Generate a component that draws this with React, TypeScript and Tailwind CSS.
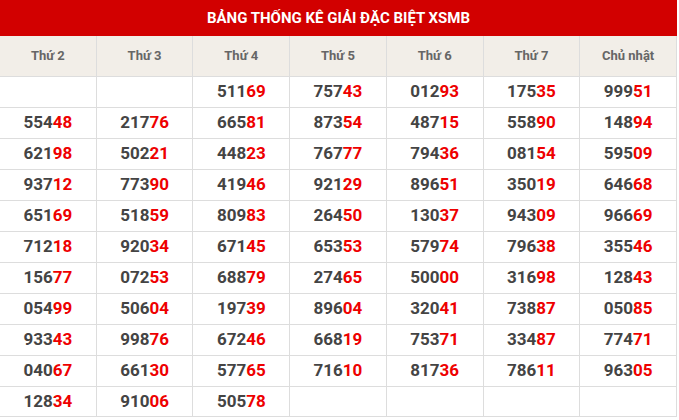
import React from "react";

const rows: string[][] = [
  ["", "", "51169", "75743", "01293", "17535", "99951"],
  ["55448", "21776", "66581", "87354", "48715", "55890", "14894"],
  ["62198", "50221", "44823", "76777", "79436", "08154", "59509"],
  ["93712", "77390", "41946", "92129", "89651", "35019", "64668"],
  ["65169", "51859", "80983", "26450", "13037", "94309", "96669"],
  ["71218", "92034", "67145", "65353", "57974", "79638", "35546"],
  ["15677", "07253", "68879", "27465", "50000", "31698", "12843"],
  ["05499", "50604", "19739", "89604", "32041", "73887", "05085"],
  ["93343", "99876", "67246", "66819", "75371", "33487", "77471"],
  ["04067", "66130", "57765", "71610", "81736", "78611", "96305"],
  ["12834", "91006", "50578", "", "", "", ""],
];

const days = ["Thứ 2", "Thứ 3", "Thứ 4", "Thứ 5", "Thứ 6", "Thứ 7", "Chủ nhật"];

export default function App() {
  return (
    <div
      className="w-[677px] bg-white"
      style={{ fontFamily: "Roboto, 'Noto Sans', sans-serif" }}
    >
      <div className="h-[36px] bg-[#d20000] flex items-center justify-center text-white font-bold text-[15px]">
        BẢNG THỐNG KÊ GIẢI ĐẶC BIỆT XSMB
      </div>
      <div className="grid grid-cols-7 h-[40px] bg-[#f2eee8]">
        {days.map((d) => (
          <div
            key={d}
            className="border-r border-[#dddddd] flex items-center justify-center text-[13px] font-bold text-[#666666]"
          >
            {d}
          </div>
        ))}
      </div>
      {rows.map((r, i) => (
        <div
          key={i}
          className="grid grid-cols-7 h-[31px] border-t border-[#dddddd] last:border-b"
        >
          {r.map((v, j) => (
            <div
              key={j}
              className="border-r border-[#dddddd] flex items-center justify-center text-[17px] font-bold text-[#444444]"
            >
              {v && (
                <span>
                  {v.slice(0, 3)}
                  <span className="text-[#ee0000]">{v.slice(3)}</span>
                </span>
              )}
            </div>
          ))}
        </div>
      ))}
    </div>
  );
}
